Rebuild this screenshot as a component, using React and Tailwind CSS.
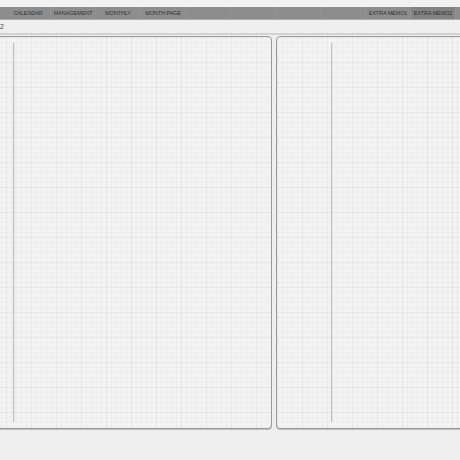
const tabs = ["CALENDAR","MANAGEMENT","MONTHLY","MONTH PAGE","","","","","EXTRA MEMO1","EXTRA MEMO2",""];

const grid = {
  backgroundColor: "#f3f3f3",
  backgroundImage:
    "linear-gradient(to right, rgba(0,0,0,0.03) 1px, transparent 1px), linear-gradient(to bottom, rgba(0,0,0,0.03) 1px, transparent 1px), linear-gradient(to right, rgba(0,0,0,0.018) 1px, transparent 1px), linear-gradient(to bottom, rgba(0,0,0,0.018) 1px, transparent 1px)",
  backgroundSize: "25px 25px, 25px 25px, 5px 5px, 5px 5px",
};

export default function App() {
  return (
    <div className="w-[460px] h-[460px] overflow-hidden bg-[#efefef] flex flex-col" style={{ fontFamily: '"Liberation Sans", Arial, sans-serif' }}>
      <div className="h-[7px] bg-[#f1f1f1]" />
      <div className="h-[13px] bg-[#8d8d8d] flex pl-[6px] border-b border-[#a8a8a8]">
        {tabs.map((t, i) => (
          <div key={i} className={`w-[45px] shrink-0 h-full flex items-center justify-center text-[5.5px] tracking-[-0.1px] text-[#333] border-r border-[#939393] ${i === 9 ? "bg-[#828282]" : ""}`}>
            {t}
          </div>
        ))}
      </div>
      <div className="h-[13px] flex items-center text-[7px] leading-none text-[#444] pl-[0px]">2</div>
      <div className="h-[2px] bg-[#d2d2d2]" />
      <div className="flex gap-[4px] mt-[1px] ml-[-20px] h-[393px] shrink-0">
        <div className="w-[292px] shrink-0 h-full rounded-[4px] border border-[#9a9a9a] shadow-[0_1px_0_#bdbdbd] p-[6px] flex" style={grid}>
          <div className="w-[26px] shrink-0" />
          <div className="w-[1px] h-full bg-[#c2c2c2] shadow-[1px_0_0_#e2e2e2]" />
        </div>
        <div className="w-[220px] shrink-0 h-full rounded-[4px] border border-[#9a9a9a] shadow-[0_1px_0_#bdbdbd] p-[6px] flex" style={grid}>
          <div className="w-[48px] shrink-0" />
          <div className="w-[1px] h-full bg-[#c2c2c2] shadow-[1px_0_0_#e2e2e2]" />
        </div>
      </div>
    </div>
  );
}
